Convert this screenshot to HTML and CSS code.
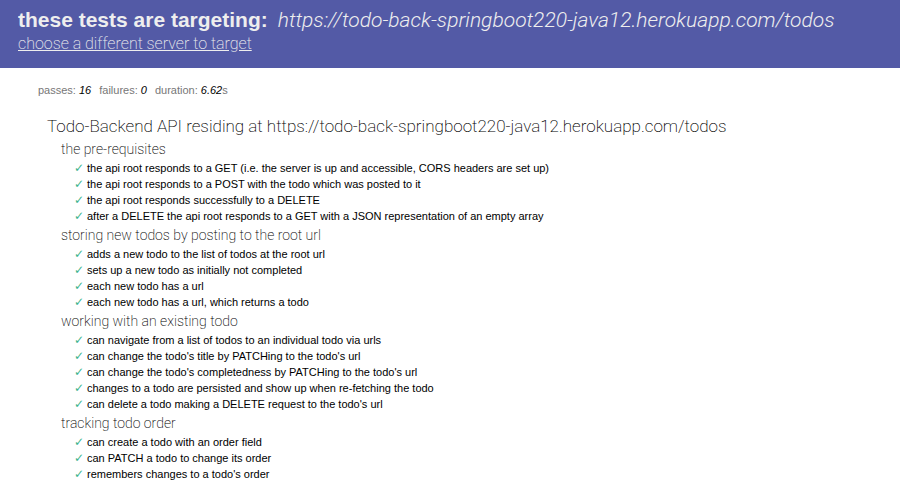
FILE: index.html
```html
<!DOCTYPE html>
<html lang="en">
<head>
<meta charset="utf-8">
<title>Todo-Backend tests</title>
<meta name="viewport" content="width=device-width, initial-scale=1">
<link rel="stylesheet" href="styles.css">
</head>
<body>
<header class="banner">
  <h2 class="target">these tests are targeting: <span class="target-url">https://todo-back-springboot220-java12.herokuapp.com/todos</span></h2>
  <a class="choose" href="#">choose a different server to target</a>
</header>
<main class="report">
  <ul class="stats">
    <li>passes: <em>16</em></li>
    <li>failures: <em>0</em></li>
    <li>duration: <em>6.62</em>s</li>
  </ul>
  <h1 class="title">Todo-Backend API residing at https://todo-back-springboot220-java12.herokuapp.com/todos</h1>
  <section class="suite">
    <h2 class="suite-name">the pre-requisites</h2>
    <ul class="tests">
      <li>the api root responds to a GET (i.e. the server is up and accessible, CORS headers are set up)</li>
      <li>the api root responds to a POST with the todo which was posted to it</li>
      <li>the api root responds successfully to a DELETE</li>
      <li>after a DELETE the api root responds to a GET with a JSON representation of an empty array</li>
    </ul>
  </section>
  <section class="suite">
    <h2 class="suite-name">storing new todos by posting to the root url</h2>
    <ul class="tests">
      <li>adds a new todo to the list of todos at the root url</li>
      <li>sets up a new todo as initially not completed</li>
      <li>each new todo has a url</li>
      <li>each new todo has a url, which returns a todo</li>
    </ul>
  </section>
  <section class="suite">
    <h2 class="suite-name">working with an existing todo</h2>
    <ul class="tests">
      <li>can navigate from a list of todos to an individual todo via urls</li>
      <li>can change the todo's title by PATCHing to the todo's url</li>
      <li>can change the todo's completedness by PATCHing to the todo's url</li>
      <li>changes to a todo are persisted and show up when re-fetching the todo</li>
      <li>can delete a todo making a DELETE request to the todo's url</li>
    </ul>
  </section>
  <section class="suite">
    <h2 class="suite-name">tracking todo order</h2>
    <ul class="tests">
      <li>can create a todo with an order field</li>
      <li>can PATCH a todo to change its order</li>
      <li>remembers changes to a todo's order</li>
    </ul>
  </section>
</main>
</body>
</html>
```
FILE: styles.css
```css
body {
  margin: 0;
  background: #fff;
  color: #000;
  font-family: "Liberation Sans", Arial, sans-serif;
  font-size: 11px;
}

h1, h2, ul {
  margin: 0;
  padding: 0;
}

ul {
  list-style: none;
}

.banner {
  padding: 8px 18px 12px;
  background: #535aa6;
  color: #eee;
}

.target {
  display: flex;
  flex-wrap: wrap;
  align-items: baseline;
  column-gap: 10px;
  font-size: 21px;
  line-height: 24px;
}

.target-url,
.choose,
.title,
.suite-name {
  font-family: Roboto, sans-serif;
  font-weight: 200;
}

.target-url {
  font-size: 21px;
  font-style: italic;
  font-weight: 300;
}

.choose {
  display: block;
  width: fit-content;
  color: #eee;
  font-size: 16px;
  line-height: 24px;
}

.report {
  padding: 14px 38px;
}

.stats {
  display: flex;
  gap: 8px;
  color: #777;
  line-height: 16px;
}

.stats em {
  color: #000;
}

.title {
  margin: 16px 0 0 9px;
  font-size: 17px;
  line-height: 24px;
}

.suite {
  margin-left: 23px;
}

.suite-name {
  font-size: 14px;
  line-height: 22px;
}

.tests {
  padding-left: 13px;
  line-height: 16px;
}

.tests li {
  display: flex;
}

.tests li::before {
  content: "✓";
  width: 13px;
  color: #3cb48c;
  font-family: "DejaVu Sans", sans-serif;
  font-size: 12px;
}
```
